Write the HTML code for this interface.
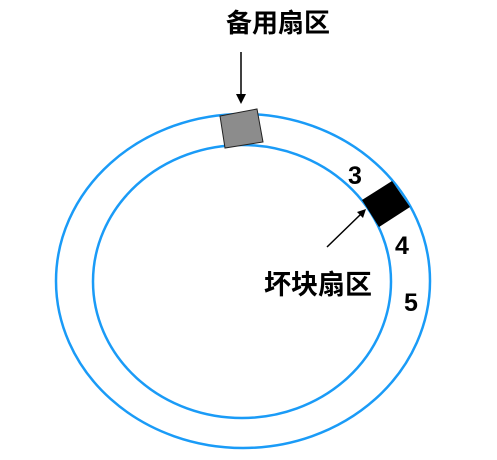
<!DOCTYPE html>
<html><head><meta charset="utf-8"><style>
html,body{margin:0;padding:0;background:#fff;width:497px;height:460px;overflow:hidden}
</style></head><body>
<svg width="497" height="460" viewBox="0 0 497 460" xmlns="http://www.w3.org/2000/svg">
<rect width="497" height="460" fill="#fff"/>
<ellipse cx="243" cy="281" rx="187" ry="167" fill="none" stroke="#1a9bf7" stroke-width="2.5"/>
<ellipse cx="242" cy="281.5" rx="149" ry="136.5" fill="none" stroke="#1a9bf7" stroke-width="2.5"/>
<polygon points="220,116 257,109 263,142 225,148" fill="#8c8c8c" stroke="#222" stroke-width="1"/>
<polygon points="362,200 392,181 410,207 379,227" fill="#000"/>
<line x1="241" y1="52" x2="241" y2="96" stroke="#000" stroke-width="1.5"/>
<polygon points="236,94 246,94 241,104" fill="#000"/>
<line x1="327" y1="247" x2="361" y2="214" stroke="#000" stroke-width="1.5"/>
<polygon points="366,209 357,212 363,218" fill="#000"/>
<g font-family="Liberation Sans, Noto Sans CJK SC, sans-serif" font-weight="bold" fill="#000">
<text x="226" y="32" font-size="26">备用扇区</text>
<text x="264" y="294" font-size="27">坏块扇区</text>
<text x="348" y="184" font-size="25">3</text>
<text x="395" y="254" font-size="25">4</text>
<text x="404" y="311" font-size="25">5</text>
</g>
</svg>
</body></html>
